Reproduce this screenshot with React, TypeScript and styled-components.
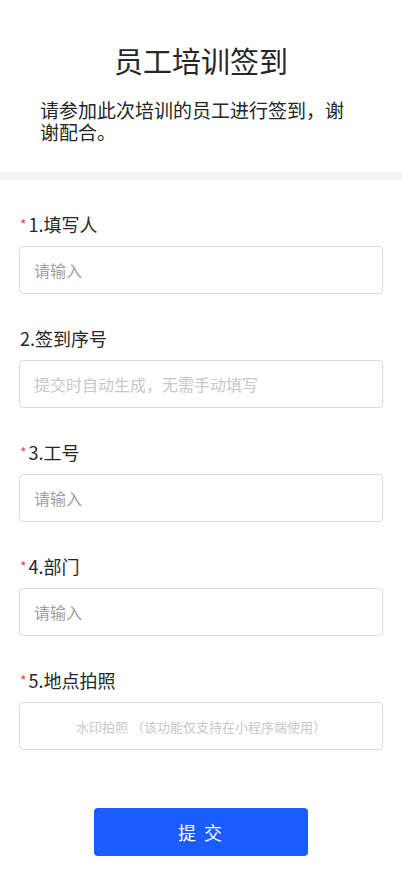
import styled, { createGlobalStyle } from 'styled-components';

const GlobalStyle = createGlobalStyle`
	* {
		box-sizing: border-box;
	}
	body {
		margin: 0;
		background: #fff;
		font-family: 'Noto Sans CJK SC', 'Noto Sans', sans-serif;
		color: #333;
	}
`;

type Field = {
	label: string;
	required: boolean;
	placeholder: string;
	muted?: boolean;
	photo?: boolean;
};

const fields: Field[] = [
	{ label: '1.填写人', required: true, placeholder: '请输入' },
	{ label: '2.签到序号', required: false, placeholder: '提交时自动生成，无需手动填写', muted: true },
	{ label: '3.工号', required: true, placeholder: '请输入' },
	{ label: '4.部门', required: true, placeholder: '请输入' },
	{ label: '5.地点拍照', required: true, placeholder: '水印拍照 （该功能仅支持在小程序端使用）', photo: true },
];

const Page = styled.div`
	width: 100%;
	min-height: 876px;
	background: #fff;
`;

const Header = styled.div`
	padding: 41px 40px 29px;
`;

const Title = styled.h1`
	margin: 0;
	font-size: 29px;
	line-height: 38px;
	font-weight: 400;
	text-align: center;
	color: #262626;
`;

const Description = styled.p`
	margin: 20px 0 0;
	font-size: 19px;
	line-height: 22px;
	color: #262626;
`;

const Divider = styled.div`
	height: 8px;
	background: #f2f2f2;
`;

const Form = styled.div`
	padding: 32px 19px 0;
	display: flex;
	flex-direction: column;
	gap: 32px;
`;

const Item = styled.div`
	display: flex;
	flex-direction: column;
	gap: 10px;
`;

const Label = styled.div`
	display: flex;
	align-items: center;
	height: 24px;
	font-size: 18px;
	color: #262626;
	padding-left: 1px;
`;

const Required = styled.span`
	color: #f04b4b;
	font-size: 14px;
	line-height: 1;
	margin-right: 2px;
	align-self: center;
`;

const Input = styled.input<{ $muted?: boolean }>`
	width: 100%;
	height: 48px;
	border: 1px solid #dcdcdc;
	border-radius: 4px;
	padding: 0 14px;
	font-family: inherit;
	font-size: 16px;
	outline: none;
	background: #fff;
	&::placeholder {
		color: ${(p) => (p.$muted ? '#c8c8c8' : '#a0a0a0')};
	}
`;

const PhotoBox = styled.div`
	height: 48px;
	border: 1px solid #dcdcdc;
	border-radius: 4px;
	display: flex;
	align-items: center;
	justify-content: center;
	font-size: 13px;
	color: #c8c8c8;
`;

const Footer = styled.div`
	display: flex;
	justify-content: center;
	padding-top: 26px;
	padding-bottom: 20px;
`;

const SubmitButton = styled.button`
	width: 214px;
	height: 48px;
	border: none;
	border-radius: 4px;
	background: #1a5cff;
	color: #fff;
	font-family: inherit;
	font-size: 18px;
	letter-spacing: 2px;
	cursor: pointer;
`;

export default function App() {
	return (
		<Page>
			<GlobalStyle />
			<Header>
				<Title>员工培训签到</Title>
				<Description>请参加此次培训的员工进行签到，谢谢配合。</Description>
			</Header>
			<Divider />
			<Form>
				{fields.map((f) => (
					<Item key={f.label}>
						<Label>
							{f.required && <Required>*</Required>}
							{f.label}
						</Label>
						{f.photo ? (
							<PhotoBox>{f.placeholder}</PhotoBox>
						) : (
							<Input placeholder={f.placeholder} readOnly={f.muted} $muted={f.muted} />
						)}
					</Item>
				))}
				<Footer>
					<SubmitButton type="button">提 交</SubmitButton>
				</Footer>
			</Form>
		</Page>
	);
}
